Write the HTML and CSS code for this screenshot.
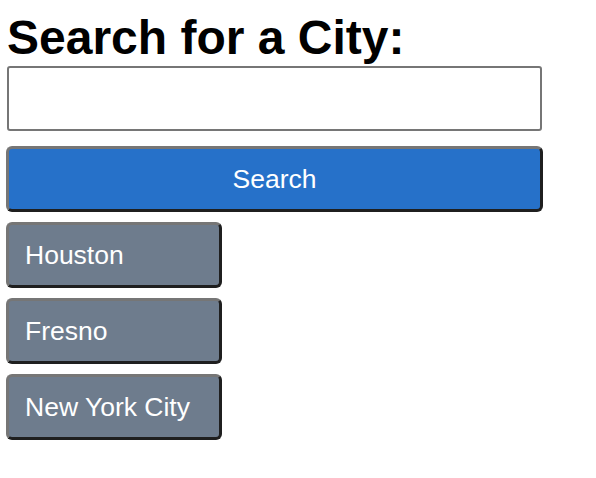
FILE: index.html
```html
<!DOCTYPE html>
<html>
<head>
<meta charset="utf-8">
<link rel="stylesheet" href="styles.css">
</head>
<body>
<div class="page">
  <h1 class="title">Search for a City:</h1>
  <input class="search-input" type="text">
  <button class="btn btn-search">Search</button>
  <div class="history">
    <button class="btn btn-city">Houston</button>
    <button class="btn btn-city">Fresno</button>
    <button class="btn btn-city">New York City</button>
  </div>
</div>
</body>
</html>
```
FILE: styles.css
```css
html, body {
  margin: 0;
  padding: 0;
  background: #ffffff;
}

.page {
  padding: 10px 0 0 6px;
  display: flex;
  flex-direction: column;
  align-items: flex-start;
  font-family: "Liberation Sans", Arial, sans-serif;
}

.title {
  margin: 0 0 0 1px;
  font-size: 48px;
  line-height: 56px;
  font-weight: bold;
  color: #000;
}

.search-input {
  box-sizing: border-box;
  margin: 0 0 0 1px;
  width: 535px;
  height: 65px;
  border: 2px solid #767676;
  border-radius: 3px;
  background: #fff;
  font-family: inherit;
  font-size: 26px;
  padding: 0 10px;
}

.btn {
  box-sizing: border-box;
  border-style: solid;
  border-width: 3px;
  border-color: #767676 #1f1f1f #1f1f1f #767676;
  border-radius: 6px;
  color: #fff;
  font-family: "Liberation Sans", Arial, sans-serif;
  font-size: 26.5px;
  height: 66px;
  cursor: pointer;
}

.btn-search {
  margin-top: 15px;
  width: 537px;
  background: #2671c9;
  text-align: center;
  padding: 0;
}

.history {
  margin-top: 10px;
  display: flex;
  flex-direction: column;
  gap: 10px;
}

.btn-city {
  width: 216px;
  background: #6e7c8d;
  text-align: left;
  padding: 0 0 0 16px;
}
```
